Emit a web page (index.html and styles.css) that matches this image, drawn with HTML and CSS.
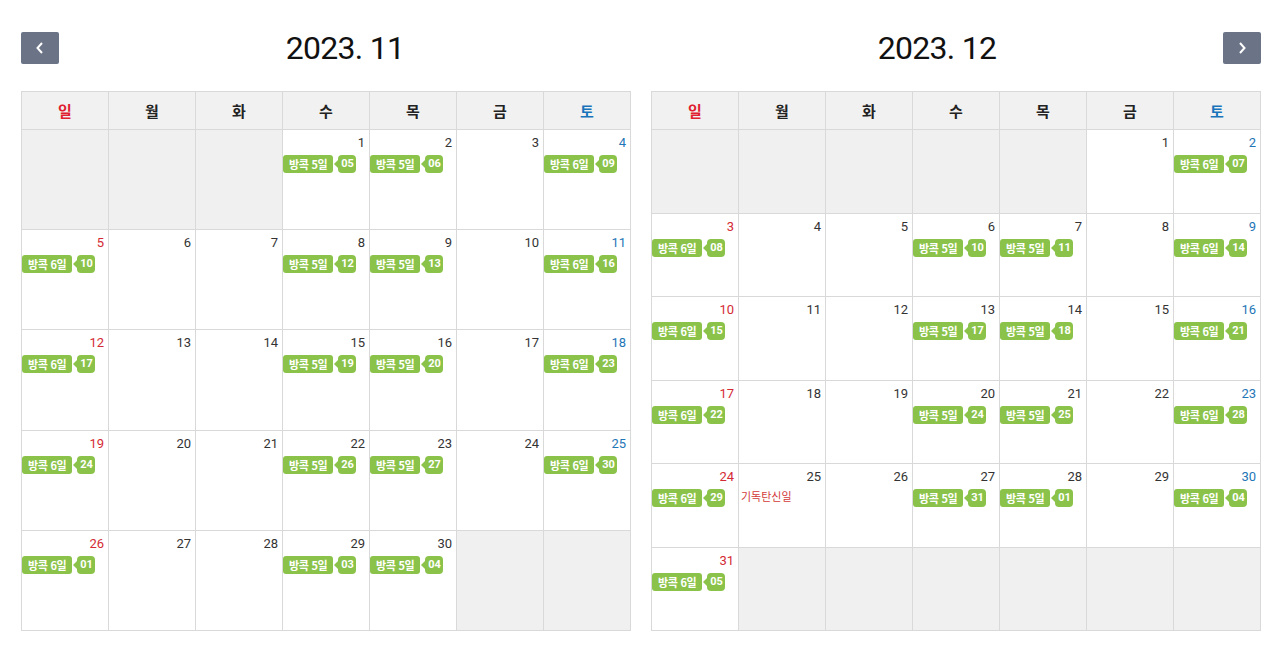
FILE: index.html
```html
<!DOCTYPE html>
<html lang="ko">
<head>
<meta charset="utf-8">
<title>Calendar</title>
<link rel="stylesheet" href="styles.css">
</head>
<body>
<div class="wrap">
  <section class="cal">
    <div class="cal-head">
      <button class="nav"><svg width="10" height="14" viewBox="0 0 10 14"><polyline points="7,2 2.5,7 7,12" fill="none" stroke="#fff" stroke-width="2"/></svg></button>
      <h2 class="title">2023. 11</h2>
    </div>
    <div class="grid rows5">
      <div class="dow sun">일</div><div class="dow">월</div><div class="dow">화</div><div class="dow">수</div><div class="dow">목</div><div class="dow">금</div><div class="dow sat">토</div>

      <div class="cell off"></div><div class="cell off"></div><div class="cell off"></div>
      <div class="cell"><span class="num">1</span><div class="ev"><span class="badge">방콕 5일</span><span class="tag">05</span></div></div>
      <div class="cell"><span class="num">2</span><div class="ev"><span class="badge">방콕 5일</span><span class="tag">06</span></div></div>
      <div class="cell"><span class="num">3</span></div>
      <div class="cell"><span class="num sat">4</span><div class="ev"><span class="badge">방콕 6일</span><span class="tag">09</span></div></div>

      <div class="cell"><span class="num sun">5</span><div class="ev"><span class="badge">방콕 6일</span><span class="tag">10</span></div></div>
      <div class="cell"><span class="num">6</span></div>
      <div class="cell"><span class="num">7</span></div>
      <div class="cell"><span class="num">8</span><div class="ev"><span class="badge">방콕 5일</span><span class="tag">12</span></div></div>
      <div class="cell"><span class="num">9</span><div class="ev"><span class="badge">방콕 5일</span><span class="tag">13</span></div></div>
      <div class="cell"><span class="num">10</span></div>
      <div class="cell"><span class="num sat">11</span><div class="ev"><span class="badge">방콕 6일</span><span class="tag">16</span></div></div>

      <div class="cell"><span class="num sun">12</span><div class="ev"><span class="badge">방콕 6일</span><span class="tag">17</span></div></div>
      <div class="cell"><span class="num">13</span></div>
      <div class="cell"><span class="num">14</span></div>
      <div class="cell"><span class="num">15</span><div class="ev"><span class="badge">방콕 5일</span><span class="tag">19</span></div></div>
      <div class="cell"><span class="num">16</span><div class="ev"><span class="badge">방콕 5일</span><span class="tag">20</span></div></div>
      <div class="cell"><span class="num">17</span></div>
      <div class="cell"><span class="num sat">18</span><div class="ev"><span class="badge">방콕 6일</span><span class="tag">23</span></div></div>

      <div class="cell"><span class="num sun">19</span><div class="ev"><span class="badge">방콕 6일</span><span class="tag">24</span></div></div>
      <div class="cell"><span class="num">20</span></div>
      <div class="cell"><span class="num">21</span></div>
      <div class="cell"><span class="num">22</span><div class="ev"><span class="badge">방콕 5일</span><span class="tag">26</span></div></div>
      <div class="cell"><span class="num">23</span><div class="ev"><span class="badge">방콕 5일</span><span class="tag">27</span></div></div>
      <div class="cell"><span class="num">24</span></div>
      <div class="cell"><span class="num sat">25</span><div class="ev"><span class="badge">방콕 6일</span><span class="tag">30</span></div></div>

      <div class="cell"><span class="num sun">26</span><div class="ev"><span class="badge">방콕 6일</span><span class="tag">01</span></div></div>
      <div class="cell"><span class="num">27</span></div>
      <div class="cell"><span class="num">28</span></div>
      <div class="cell"><span class="num">29</span><div class="ev"><span class="badge">방콕 5일</span><span class="tag">03</span></div></div>
      <div class="cell"><span class="num">30</span><div class="ev"><span class="badge">방콕 5일</span><span class="tag">04</span></div></div>
      <div class="cell off"></div><div class="cell off"></div>
    </div>
  </section>

  <section class="cal">
    <div class="cal-head">
      <h2 class="title">2023. 12</h2>
      <button class="nav"><svg width="10" height="14" viewBox="0 0 10 14"><polyline points="3,2 7.5,7 3,12" fill="none" stroke="#fff" stroke-width="2"/></svg></button>
    </div>
    <div class="grid rows6">
      <div class="dow sun">일</div><div class="dow">월</div><div class="dow">화</div><div class="dow">수</div><div class="dow">목</div><div class="dow">금</div><div class="dow sat">토</div>

      <div class="cell off"></div><div class="cell off"></div><div class="cell off"></div><div class="cell off"></div><div class="cell off"></div>
      <div class="cell"><span class="num">1</span></div>
      <div class="cell"><span class="num sat">2</span><div class="ev"><span class="badge">방콕 6일</span><span class="tag">07</span></div></div>

      <div class="cell"><span class="num sun">3</span><div class="ev"><span class="badge">방콕 6일</span><span class="tag">08</span></div></div>
      <div class="cell"><span class="num">4</span></div>
      <div class="cell"><span class="num">5</span></div>
      <div class="cell"><span class="num">6</span><div class="ev"><span class="badge">방콕 5일</span><span class="tag">10</span></div></div>
      <div class="cell"><span class="num">7</span><div class="ev"><span class="badge">방콕 5일</span><span class="tag">11</span></div></div>
      <div class="cell"><span class="num">8</span></div>
      <div class="cell"><span class="num sat">9</span><div class="ev"><span class="badge">방콕 6일</span><span class="tag">14</span></div></div>

      <div class="cell"><span class="num sun">10</span><div class="ev"><span class="badge">방콕 6일</span><span class="tag">15</span></div></div>
      <div class="cell"><span class="num">11</span></div>
      <div class="cell"><span class="num">12</span></div>
      <div class="cell"><span class="num">13</span><div class="ev"><span class="badge">방콕 5일</span><span class="tag">17</span></div></div>
      <div class="cell"><span class="num">14</span><div class="ev"><span class="badge">방콕 5일</span><span class="tag">18</span></div></div>
      <div class="cell"><span class="num">15</span></div>
      <div class="cell"><span class="num sat">16</span><div class="ev"><span class="badge">방콕 6일</span><span class="tag">21</span></div></div>

      <div class="cell"><span class="num sun">17</span><div class="ev"><span class="badge">방콕 6일</span><span class="tag">22</span></div></div>
      <div class="cell"><span class="num">18</span></div>
      <div class="cell"><span class="num">19</span></div>
      <div class="cell"><span class="num">20</span><div class="ev"><span class="badge">방콕 5일</span><span class="tag">24</span></div></div>
      <div class="cell"><span class="num">21</span><div class="ev"><span class="badge">방콕 5일</span><span class="tag">25</span></div></div>
      <div class="cell"><span class="num">22</span></div>
      <div class="cell"><span class="num sat">23</span><div class="ev"><span class="badge">방콕 6일</span><span class="tag">28</span></div></div>

      <div class="cell"><span class="num sun">24</span><div class="ev"><span class="badge">방콕 6일</span><span class="tag">29</span></div></div>
      <div class="cell"><span class="num">25</span><div class="holiday">기독탄신일</div></div>
      <div class="cell"><span class="num">26</span></div>
      <div class="cell"><span class="num">27</span><div class="ev"><span class="badge">방콕 5일</span><span class="tag">31</span></div></div>
      <div class="cell"><span class="num">28</span><div class="ev"><span class="badge">방콕 5일</span><span class="tag">01</span></div></div>
      <div class="cell"><span class="num">29</span></div>
      <div class="cell"><span class="num sat">30</span><div class="ev"><span class="badge">방콕 6일</span><span class="tag">04</span></div></div>

      <div class="cell"><span class="num sun">31</span><div class="ev"><span class="badge">방콕 6일</span><span class="tag">05</span></div></div>
      <div class="cell off"></div><div class="cell off"></div><div class="cell off"></div><div class="cell off"></div><div class="cell off"></div><div class="cell off"></div>
    </div>
  </section>
</div>
</body>
</html>
```

FILE: styles.css
```css
html, body {
  margin: 0;
  padding: 0;
  background: #fff;
}
body {
  font-family: Roboto, "Noto Sans CJK KR", sans-serif;
  color: #222;
}
.wrap {
  display: flex;
  gap: 20px;
  padding: 32px 14px 0 21px;
}
.cal {
  width: 610px;
  flex: none;
}
.cal-head {
  display: flex;
  align-items: center;
  height: 32px;
  margin-bottom: 27px;
}
.nav {
  width: 38px;
  height: 32px;
  flex: none;
  border: 0;
  border-radius: 2px;
  background: #6b7387;
  padding: 0;
  display: flex;
  align-items: center;
  justify-content: center;
  cursor: pointer;
}
.title {
  flex: 1;
  margin: 0;
  text-align: center;
  font-family: Roboto, sans-serif;
  font-weight: 400;
  font-size: 32px;
  letter-spacing: -0.7px;
  line-height: 32px;
  color: #111;
}
.grid {
  display: grid;
  grid-template-columns: repeat(7, 1fr);
  height: 540px;
  box-sizing: border-box;
  border-top: 1px solid #d9d9d9;
  border-left: 1px solid #d9d9d9;
}
.rows5 { grid-template-rows: 38px repeat(5, 1fr); }
.rows6 { grid-template-rows: 38px repeat(6, 1fr); }
.dow {
  background: #f1f1f1;
  border-right: 1px solid #d9d9d9;
  border-bottom: 1px solid #d9d9d9;
  display: flex;
  align-items: center;
  justify-content: center;
  font-family: "Noto Sans CJK KR", sans-serif;
  font-weight: 700;
  font-size: 15px;
  color: #222;
}
.dow.sun { color: #e0202f; }
.dow.sat { color: #1a74bb; }
.cell {
  border-right: 1px solid #d9d9d9;
  border-bottom: 1px solid #d9d9d9;
  padding: 4px 4px 0 0;
  display: flex;
  flex-direction: column;
  min-width: 0;
  min-height: 0;
}
.cell.off { background: #f0f0f0; }
.num {
  align-self: flex-end;
  font-size: 13px;
  line-height: 18px;
  color: #333;
}
.num.sun { color: #d42a34; }
.num.sat { color: #1f76b6; }
.ev {
  display: flex;
  align-items: center;
  margin-top: 3px;
}
.badge {
  background: #8bc34a;
  color: #fff;
  font-family: "Noto Sans CJK KR", sans-serif;
  font-weight: 700;
  font-size: 11px;
  letter-spacing: -0.3px;
  height: 18px;
  line-height: 18px;
  padding: 0 6px;
  border-radius: 3px;
  white-space: nowrap;
}
.tag {
  position: relative;
  margin-left: 5px;
  background: #8bc34a;
  color: #fff;
  font-family: Roboto, sans-serif;
  font-weight: 700;
  font-size: 11px;
  height: 18px;
  line-height: 18px;
  min-width: 18px;
  padding: 0 1px;
  box-sizing: border-box;
  text-align: center;
  border-radius: 4px;
}
.tag::before {
  content: "";
  position: absolute;
  left: -4px;
  top: 5px;
  border-top: 4px solid transparent;
  border-bottom: 4px solid transparent;
  border-right: 4px solid #8bc34a;
}
.holiday {
  font-family: "Noto Sans CJK KR", sans-serif;
  font-size: 11px;
  line-height: 14px;
  color: #d23a3a;
  margin-top: 3px;
  padding-left: 2px;
}
```
